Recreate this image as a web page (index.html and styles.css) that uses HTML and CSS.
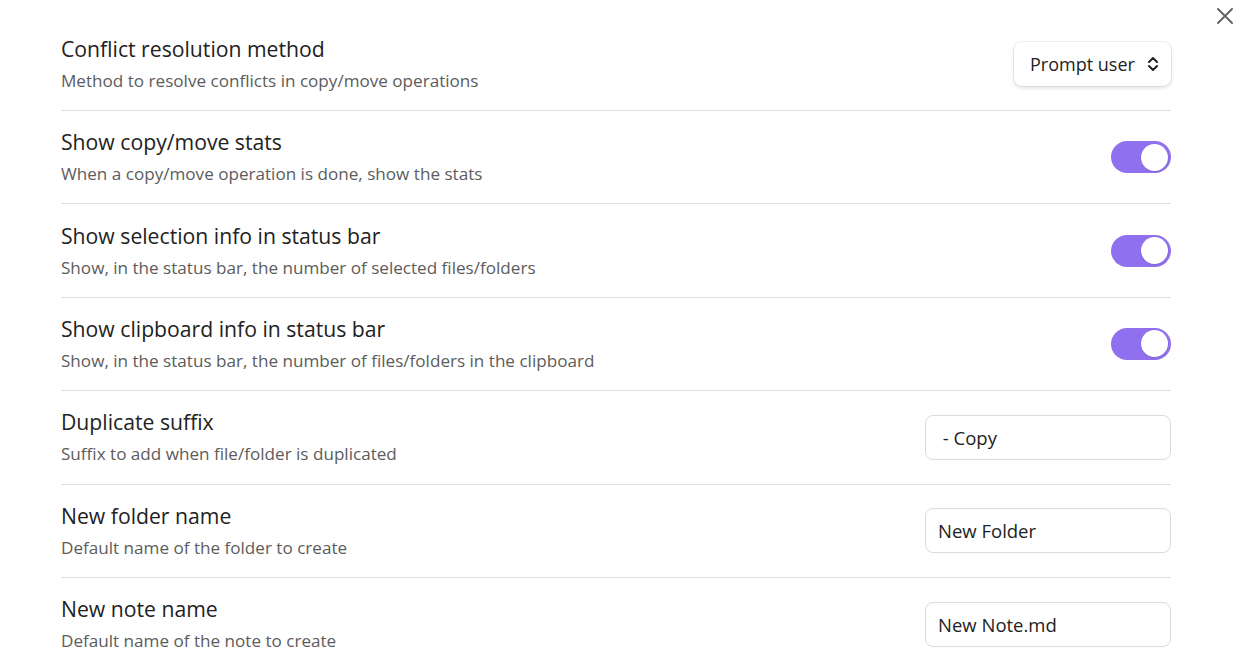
FILE: index.html
```html
<!DOCTYPE html>
<html>
<head>
<meta charset="utf-8">
<link rel="stylesheet" href="styles.css">
</head>
<body>
<div class="modal">
  <button class="close" aria-label="Close">
    <svg width="18" height="18" viewBox="0 0 18 18" fill="none" stroke="currentColor" stroke-width="2" stroke-linecap="round"><path d="M2 2l14 14M16 2 2 16"/></svg>
  </button>
  <div class="settings">
    <div class="item">
      <div class="info">
        <div class="name">Conflict resolution method</div>
        <div class="desc">Method to resolve conflicts in copy/move operations</div>
      </div>
      <div class="control">
        <div class="dropdown">Prompt user
          <svg class="chev" width="14" height="16" viewBox="0 0 14 16" fill="none" stroke="currentColor" stroke-width="2" stroke-linecap="round" stroke-linejoin="round"><path d="M3 6l4-4 4 4M3 10l4 4 4-4"/></svg>
        </div>
      </div>
    </div>
    <div class="item">
      <div class="info">
        <div class="name">Show copy/move stats</div>
        <div class="desc">When a copy/move operation is done, show the stats</div>
      </div>
      <div class="control"><div class="toggle on"><div class="knob"></div></div></div>
    </div>
    <div class="item">
      <div class="info">
        <div class="name">Show selection info in status bar</div>
        <div class="desc">Show, in the status bar, the number of selected files/folders</div>
      </div>
      <div class="control"><div class="toggle on"><div class="knob"></div></div></div>
    </div>
    <div class="item">
      <div class="info">
        <div class="name">Show clipboard info in status bar</div>
        <div class="desc">Show, in the status bar, the number of files/folders in the clipboard</div>
      </div>
      <div class="control"><div class="toggle on"><div class="knob"></div></div></div>
    </div>
    <div class="item">
      <div class="info">
        <div class="name">Duplicate suffix</div>
        <div class="desc">Suffix to add when file/folder is duplicated</div>
      </div>
      <div class="control"><input class="text" type="text" value=" - Copy"></div>
    </div>
    <div class="item">
      <div class="info">
        <div class="name">New folder name</div>
        <div class="desc">Default name of the folder to create</div>
      </div>
      <div class="control"><input class="text" type="text" value="New Folder"></div>
    </div>
    <div class="item">
      <div class="info">
        <div class="name">New note name</div>
        <div class="desc">Default name of the note to create</div>
      </div>
      <div class="control"><input class="text" type="text" value="New Note.md"></div>
    </div>
  </div>
</div>
</body>
</html>
```
FILE: styles.css
```css
* { box-sizing: border-box; }
html, body { margin: 0; padding: 0; background: #fff; }
body {
  font-family: "Open Sans", "Noto Sans", sans-serif;
  color: #222;
  width: 1246px;
  height: 672px;
  overflow: hidden;
}
.modal { position: relative; padding: 17px 75px 0 61px; }
.close {
  position: absolute;
  top: 7px;
  right: 12px;
  width: 18px;
  height: 18px;
  padding: 0;
  border: 0;
  background: none;
  color: #666;
  display: flex;
}
.settings { display: flex; flex-direction: column; }
.item {
  display: flex;
  align-items: center;
  height: 93.4px;
  border-top: 1px solid #e0e0e0;
}
.item:first-child { border-top: 0; height: 93px; }
.info { flex: 1; }
.name {
  font-size: 21.2px;
  line-height: 28px;
  color: #222;
}
.desc {
  font-size: 17.1px;
  line-height: 24px;
  margin-top: 6px;
  color: #5c5c5c;
}
.control { display: flex; align-items: center; }
.dropdown {
  display: flex;
  align-items: center;
  justify-content: space-between;
  width: 157px;
  height: 44px;
  padding: 0 11px 0 16px;
  border-radius: 8px;
  background: #fff;
  box-shadow: 0 0 0 1px rgba(0,0,0,0.06), 0 2px 4px rgba(0,0,0,0.12);
  font-size: 18px;
  color: #222;
}
.chev { color: #222; }
.toggle {
  width: 60px;
  height: 32px;
  border-radius: 16px;
  background: #9170ef;
  position: relative;
}
.knob {
  position: absolute;
  top: 2.5px;
  right: 3px;
  width: 27px;
  height: 27px;
  border-radius: 50%;
  background: #fff;
  box-shadow: 0 1px 2px rgba(0,0,0,0.12);
}
.text {
  width: 246px;
  height: 45px;
  border: 1px solid #dcdcdc;
  border-radius: 8px;
  padding: 0 12px;
  font-family: "Open Sans", "Noto Sans", sans-serif;
  font-size: 18.5px;
  color: #222;
  background: #fff;
  outline: none;
}
```
